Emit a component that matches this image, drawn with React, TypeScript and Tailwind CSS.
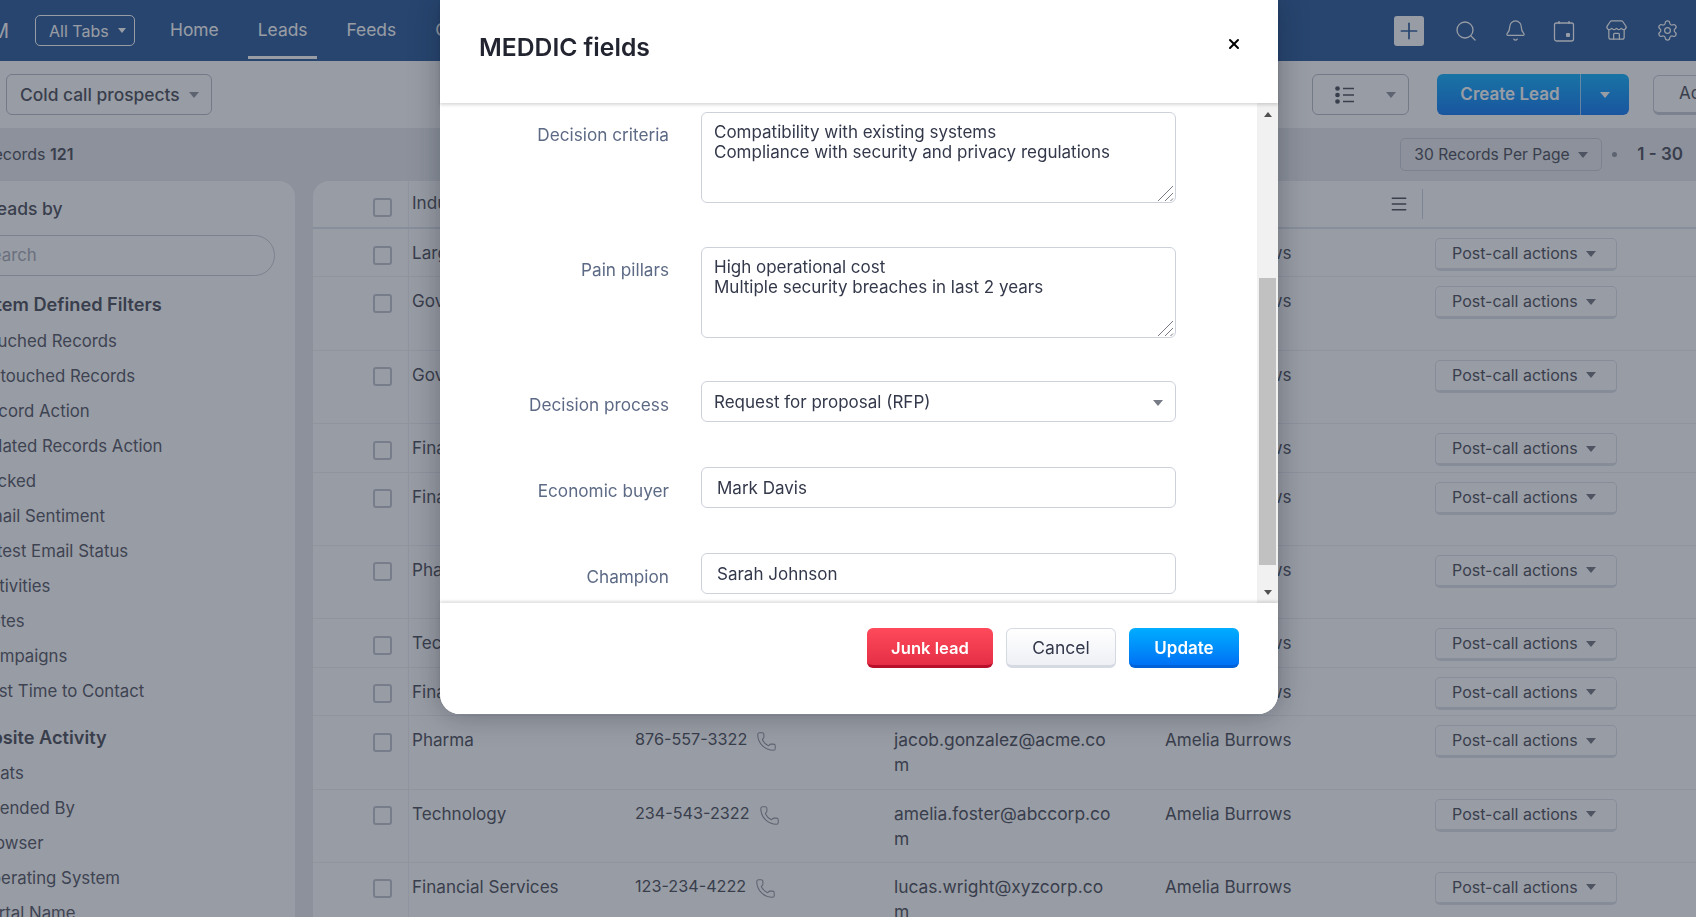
import React from 'react';
import { Bell, Menu, Phone, Plus, Search, Settings, Store, X } from 'lucide-react';

interface LeadRow {
  industry: string;
  phone: string;
  email: string;
}

const rows: LeadRow[] = [
  { industry: 'Large Enterprise', phone: '415-555-0142', email: 'mia.clark@acme.com' },
  { industry: 'Government/Military', phone: '202-555-3412', email: 'oliver.johnson@abccorp.com' },
  { industry: 'Government/Military', phone: '202-555-7781', email: 'charlotte.evans@xyzcorp.com' },
  { industry: 'Financial Services', phone: '312-555-0198', email: 'ava.lewis@acme.com' },
  { industry: 'Financial Services', phone: '646-555-2210', email: 'benjamin.harris@abccorp.com' },
  { industry: 'Pharma', phone: '617-555-9043', email: 'william.thompson@acme.com' },
  { industry: 'Technology', phone: '408-555-6672', email: 'ella.young@acme.com' },
  { industry: 'Financial Services', phone: '213-555-1134', email: 'leo.king@xyzcorp.com' },
  { industry: 'Pharma', phone: '876-557-3322', email: 'jacob.gonzalez@acme.com' },
  { industry: 'Technology', phone: '234-543-2322', email: 'amelia.foster@abccorp.com' },
  { industry: 'Financial Services', phone: '123-234-4222', email: 'lucas.wright@xyzcorp.com' }
];

const definedFilters = [
  'Touched Records',
  'Untouched Records',
  'Record Action',
  'Related Records Action',
  'Locked',
  'Email Sentiment',
  'Latest Email Status',
  'Activities',
  'Notes',
  'Campaigns',
  'Best Time to Contact'
];

const websiteFilters = ['Chats', 'Attended By', 'Browser', 'Operating System', 'Portal Name'];

const Caret = ({ className }: { className: string }) => (
  <span className={`inline-block h-0 w-0 border-x-[5.5px] border-t-[6px] border-x-transparent ${className}`} />
);

const Grip = () => (
  <svg className="pointer-events-none absolute bottom-[1px] right-[2px]" width="17" height="17" viewBox="0 0 17 17" fill="none" stroke="#777b86" strokeWidth="1">
    <path d="M1 16 16 1M8 16l8-8M13.5 16l2.5-2.5" />
  </svg>
);

const TopBar = () => (
  <header className="flex h-[61px] shrink-0 items-center bg-[#1d5195] text-[17.4px] text-white">
    <span className="flex w-[9px] justify-end whitespace-nowrap text-[20px]">CRM</span>
    <button className="ml-[26px] flex h-[31px] w-[100px] items-center gap-[9px] rounded-[5px] border border-white pl-[13px] text-[16px]">
      All Tabs
      <span className="h-0 w-0 border-x-[4.5px] border-t-[5px] border-x-transparent border-t-white" />
    </button>
    <nav className="ml-[35px] flex h-full items-center gap-[39px]">
      <span>Home</span>
      <span className="relative flex h-full items-center">
        Leads
        <span className="absolute -inset-x-[10px] bottom-[2px] h-[3px] bg-white" />
      </span>
      <span>Feeds</span>
      <span>Contacts</span>
    </nav>
    <div className="ml-auto flex items-center pr-[17px]">
      <span className="flex h-[30px] w-[30px] items-center justify-center rounded-[3px] bg-white">
        <Plus className="h-[26px] w-[26px] text-[#1d5195]" strokeWidth={1.6} />
      </span>
      <Search className="ml-[30px] h-[24px] w-[24px]" strokeWidth={1.3} />
      <Bell className="ml-[26px] h-[23px] w-[23px]" strokeWidth={1.3} />
      <svg className="ml-[26px]" width="22" height="22" viewBox="0 0 22 22" fill="none" stroke="currentColor" strokeWidth="1.3">
        <rect x="1.5" y="3" width="19" height="18" rx="2" />
        <path d="M6 1v3M16 1v3" />
        <rect x="13" y="13" width="4" height="4" rx="1" fill="currentColor" stroke="none" />
      </svg>
      <Store className="ml-[30px] h-[23px] w-[23px]" strokeWidth={1.3} />
      <Settings className="ml-[28px] h-[23px] w-[23px]" strokeWidth={1.3} />
    </div>
  </header>
);

const Toolbar = () => (
  <div className="flex h-[67px] shrink-0 items-center bg-white pl-[6px]">
    <button className="flex h-[41px] w-[206px] items-center gap-[9px] rounded-[6px] border border-[#b4b8c4] pl-[13px] pt-[1px] text-[17.4px] font-medium text-[#41434f]">
      Cold call prospects
      <Caret className="border-t-[#8a8d99]" />
    </button>
    <button className="ml-auto flex h-[41px] w-[97px] items-center justify-between rounded-[6px] border border-[#b4b8c4] pl-[22px] pr-[12px]">
      <svg width="20" height="20" viewBox="0 0 20 20" fill="#41434f" stroke="#41434f" strokeWidth="1.5">
        <circle cx="2.5" cy="3.5" r="1.6" />
        <circle cx="2.5" cy="10" r="1.6" />
        <circle cx="2.5" cy="16.5" r="1.6" />
        <path d="M8 3.5h11M8 10h11M8 16.5h11" fill="none" />
      </svg>
      <Caret className="border-t-[#8a8d99]" />
    </button>
    <div className="ml-[28px] flex h-[41px] w-[192px] rounded-[6px] bg-gradient-to-b from-[#03adff] to-[#0071f5] text-white">
      <span className="flex w-[143px] items-center justify-center pl-[3px] text-[17px] font-semibold">Create Lead</span>
      <span className="flex flex-1 items-center justify-center border-l border-white/60">
        <Caret className="border-t-white" />
      </span>
    </div>
    <button className="-mr-[77px] ml-[24px] h-[40px] w-[120px] rounded-[6px] border border-[#c5c9d3] border-b-[3px] pl-[25px] text-left text-[17px] text-[#41434f]">
      Actions
    </button>
  </div>
);

const RecordsBar = () => (
  <div className="flex h-[53px] shrink-0 items-center">
    <span className="-ml-[58px] pb-[2px] text-[16px] text-[#41434f]">
      Total Records <span className="font-semibold">121</span>
    </span>
    <button className="ml-auto flex h-[33px] w-[202px] items-center gap-[8px] rounded-[5px] border border-[#c5c9d3] pl-[13px] text-[15.6px] text-[#41434f]">
      30 Records Per Page
      <Caret className="border-t-[#6b6e7a]" />
    </button>
    <span className="ml-[10px] h-[5px] w-[5px] rounded-full bg-[#8a8d99]" />
    <span className="ml-[20px] mr-[13px] text-[17px] font-semibold text-[#41434f]">1 - 30</span>
  </div>
);

const Sidebar = () => (
  <aside className="h-full w-[315px] shrink-0 -ml-[20px] rounded-tr-[16px] bg-white text-[16.8px] text-[#4a4c5a]">
    <h3 className="-ml-[40px] pt-[15px] text-[17.5px] font-medium leading-[25px] text-[#41434f]">Filter Leads by</h3>
    <div className="mt-[14px] flex h-[41px] w-[295px] items-center rounded-r-full border border-[#c5c9d3] text-[#a4a7b2]">
      Search
    </div>
    <h3 className="-ml-[17px] mt-[16px] text-[18.2px] font-semibold leading-[25px] text-[#41434f]">System Defined Filters</h3>
    <ul className="-ml-[2px] mt-[7px] flex flex-col">
      {definedFilters.map((name) => (
        <li key={name} className="h-[35px] leading-[35px]">{name}</li>
      ))}
    </ul>
    <h3 className="-ml-[17px] mt-[16px] text-[18.2px] font-semibold leading-[25px] text-[#41434f]">Website Activity</h3>
    <ul className="-ml-[2px] mt-[6px] flex flex-col">
      {websiteFilters.map((name) => (
        <li key={name} className="h-[35px] leading-[35px]">{name}</li>
      ))}
    </ul>
  </aside>
);

const Checkbox = () => (
  <span className="mt-[16.5px] block h-[19px] w-[19px] rounded-[3px] border-2 border-[#bcc0ca]" />
);

const LeadTable = () => (
  <section className="ml-[18px] min-w-0 flex-1 overflow-hidden rounded-tl-[16px] bg-white text-[17.1px] leading-[25px] text-[#41434f]">
    <div className="flex h-[48px] items-stretch border-b-[2px] border-[#dfe3ec]">
      <div className="flex w-[96px] shrink-0 justify-end border-r border-[#eceef3] pr-[16px]">
        <Checkbox />
      </div>
      <div className="flex-1 pl-[3px] pt-[9px]">Industry</div>
      <div className="flex items-center">
        <Menu className="h-[20px] w-[20px] text-[#41434f]" strokeWidth={1.8} />
        <span className="ml-[13px] h-[30px] w-[1px] bg-[#c9d0de]" />
      </div>
      <div className="w-[273px]" />
    </div>
    {rows.map((row, i) => (
      <div key={i} className="flex items-stretch border-b border-[#eceef3]">
        <div className="flex w-[96px] shrink-0 justify-end border-r border-[#eceef3] pr-[16px]">
          <Checkbox />
        </div>
        <div className="w-[226px] shrink-0 pb-[11.4px] pl-[3px] pt-[11px]">{row.industry}</div>
        <div className="flex w-[259px] shrink-0 items-start gap-[9px] pb-[11.4px] pt-[11px] text-[16.2px]">
          {row.phone}
          <Phone className="mt-[4px] h-[21px] w-[21px] text-[#8a8d99]" strokeWidth={1.2} />
        </div>
        <div className="w-[271px] shrink-0 pb-[11.4px] pt-[11px] text-[17.4px]">
          <div className="w-[222px] break-all">{row.email}</div>
        </div>
        <div className="w-[270px] shrink-0 pb-[11.4px] pt-[11px]">Amelia Burrows</div>
        <div className="shrink-0 pt-[9px]">
          <button className="flex h-[33px] w-[182px] items-center gap-[8px] rounded-[5px] border border-[#dde0e7] border-b-[3px] pl-[16px] text-[16px] text-[#41434f]">
            Post-call actions
            <Caret className="border-t-[#6b6e7a]" />
          </button>
        </div>
      </div>
    ))}
  </section>
);

const fieldLabel = 'w-[229px] shrink-0 text-right text-[17.2px] leading-[25px] text-[#5d6a85]';
const fieldBox = 'w-[475px] rounded-[6px] border border-[#cdd1da] bg-white text-[17px] text-[#33384a] outline-none';

const TextField = ({ label, value }: { label: string; value: string }) => (
  <div className="mt-[45px] flex items-start">
    <label className={`${fieldLabel} pt-[11px]`}>{label}</label>
    <input readOnly defaultValue={value} className={`${fieldBox} ml-[32px] h-[41px] px-[15px]`} />
  </div>
);

const AreaField = ({ label, value, className }: { label: string; value: string; className: string }) => (
  <div className={`flex items-start ${className}`}>
    <label className={`${fieldLabel} pt-[10px]`}>{label}</label>
    <div className="relative ml-[32px]">
      <textarea
        readOnly
        defaultValue={value}
        className={`${fieldBox} block h-[91px] resize-none px-[12px] pt-[9px] leading-[20px]`}
      />
      <Grip />
    </div>
  </div>
);

const MeddicModal = () => (
  <div className="fixed inset-0 bg-[#313949]/50">
    <div className="absolute left-[440px] top-0 flex h-[714px] w-[838px] flex-col rounded-b-[20px] bg-white shadow-[0_0_30px_rgba(20,25,40,0.35)]">
      <div className="relative z-10 flex h-[103px] shrink-0 items-start justify-between pl-[39px] pr-[36px] shadow-[0_2px_3px_rgba(0,0,0,0.15)]">
        <h2 className="mt-[30px] text-[24.7px] font-semibold leading-[34px] text-[#222430]">MEDDIC fields</h2>
        <X className="mt-[36px] h-[16px] w-[16px] text-black" strokeWidth={3} />
      </div>
      <div className="relative flex h-[500px] shrink-0 flex-col overflow-hidden pt-[9px]">
        <AreaField className="" label="Decision criteria" value={'Compatibility with existing systems\nCompliance with security and privacy regulations'} />
        <AreaField className="mt-[44px]" label="Pain pillars" value={'High operational cost\nMultiple security breaches in last 2 years'} />
        <div className="mt-[43px] flex items-start">
          <label className={`${fieldLabel} pt-[11px]`}>Decision process</label>
          <div className={`${fieldBox} ml-[32px] flex h-[41px] items-center justify-between pl-[12px] pr-[12px] pt-[2px]`}>
            Request for proposal (RFP)
            <Caret className="border-t-[#777b86]" />
          </div>
        </div>
        <TextField label="Economic buyer" value="Mark Davis" />
        <TextField label="Champion" value="Sarah Johnson" />
        <div className="absolute inset-y-0 right-0 w-[21px] bg-[#f1f1f1]">
          <span className="absolute left-[7px] top-[9px] h-0 w-0 border-x-[4px] border-b-[5px] border-x-transparent border-b-[#505050]" />
          <span className="absolute bottom-[8px] left-[7px] h-0 w-0 border-x-[4px] border-t-[5px] border-x-transparent border-t-[#505050]" />
          <span className="absolute left-[2px] top-[175px] h-[287px] w-[17px] bg-[#c1c1c1]" />
        </div>
      </div>
      <div className="relative z-10 flex flex-1 items-start justify-end gap-[13px] rounded-b-[20px] bg-white pr-[39px] pt-[25px] shadow-[0_-2px_3px_rgba(0,0,0,0.12)]">
        <button className="h-[40px] w-[126px] rounded-[6px] border-b-[3px] border-[#b8102a] bg-gradient-to-b from-[#ff4a5c] to-[#e52e45] pt-[4px] text-[16.6px] font-semibold text-white">
          Junk lead
        </button>
        <button className="h-[40px] w-[110px] rounded-[6px] border border-b-[3px] border-[#d5d9e2] bg-gradient-to-b from-white to-[#eef0f5] pt-[3px] text-[17.5px] text-[#33384a]">
          Cancel
        </button>
        <button className="h-[40px] w-[110px] rounded-[6px] border-b-[3px] border-[#0062d8] bg-gradient-to-b from-[#03adff] to-[#0071f5] pt-[4px] text-[17px] font-semibold text-white">
          Update
        </button>
      </div>
    </div>
  </div>
);

export default function App() {
  return (
    <div className="flex h-screen w-screen flex-col overflow-hidden bg-[#e7e9ed] font-['Inter',sans-serif]">
      <TopBar />
      <Toolbar />
      <RecordsBar />
      <div className="flex min-h-0 flex-1">
        <Sidebar />
        <LeadTable />
      </div>
      <MeddicModal />
    </div>
  );
}
